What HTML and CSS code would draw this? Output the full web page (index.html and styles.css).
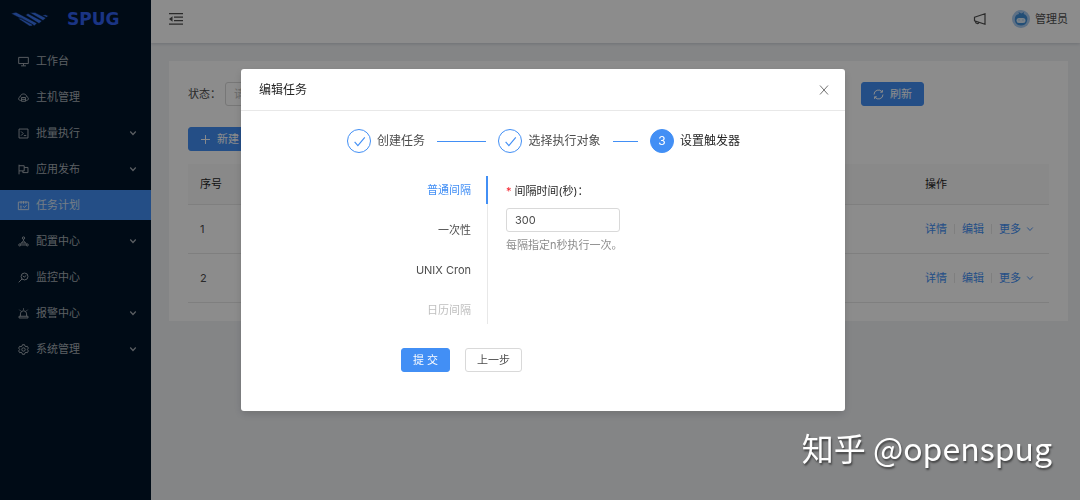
FILE: index.html
```html
<!DOCTYPE html>
<html lang="zh-CN">
<head>
<meta charset="utf-8">
<meta name="viewport" content="width=device-width, initial-scale=1">
<title>编辑任务</title>
<link rel="stylesheet" href="styles.css">
</head>
<body>
<svg class="sprite" aria-hidden="true">
  <symbol id="i-down" viewBox="0 0 16 16"><path d="M2.500 5l5.500 6 5.500-6"/></symbol>
  <symbol id="i-check" viewBox="0 0 16 16"><path d="M2 8.500l4 4.500L14.500 3"/></symbol>
</svg>
<div class="layout">
  <aside class="sider">
    <a class="brand" href="#">
      <svg class="brand-mark" viewBox="0 0 38 16" aria-hidden="true">
        <path d="M0 2.500L5 1.200 26 12.200 23.500 14.700z M7 7.500l3-.6 12 6.800-1.500 1.300h-2z M14.500 4l2.500-1.500 14 7.500-3 2.500z M18.500 1.500h5.500l11 5.500-3 2.500z M31 4.200l3.500-.5 3 1.300-2 1.300z"/>
      </svg>
      <span class="brand-name">SPUG</span>
    </a>
    <nav class="menu">
      <a class="menu-item" href="#"><svg class="icon" viewBox="0 0 16 16"><path d="M1 2h14v9H1zM8 11v3M4.500 14.300h7"/></svg><span>工作台</span></a>
      <a class="menu-item" href="#"><svg class="icon" viewBox="0 0 16 16"><path d="M4 12.500C.3 12.300-.2 7.700 3.200 7 4 1.500 12 1.500 12.800 7c3.400.7 2.900 5.300-.8 5.500M5 8h6v5.500H5zM5 10.700h6"/></svg><span>主机管理</span></a>
      <a class="menu-item" href="#"><svg class="icon" viewBox="0 0 16 16"><path d="M1.500 1.500h13v13h-13zM4.500 5l3 3-3 3M8.500 11h3.500"/></svg><span>批量执行</span><svg class="arrow"><use href="#i-down"/></svg></a>
      <a class="menu-item" href="#"><svg class="icon" viewBox="0 0 16 16"><path d="M1.500 1v14M1.500 2.500H9v7.500H1.500M9 5h5.500v7.500H7V10"/></svg><span>应用发布</span><svg class="arrow"><use href="#i-down"/></svg></a>
      <a class="menu-item active" href="#"><svg class="icon" viewBox="0 0 16 16"><path d="M.5 3h15v11H.5zM4.500 1.500v4M8 1.500v4M11.500 1.500v4M3 9h2.500M3 11.500h2.500M7.500 9l1.800 2L12.500 7.500"/></svg><span>任务计划</span></a>
      <a class="menu-item" href="#"><svg class="icon" viewBox="0 0 16 16"><circle cx="8" cy="3" r="1.700"/><circle cx="2.500" cy="13" r="1.500"/><circle cx="13.500" cy="13" r="1.500"/><path d="M8 4.700v2L4.500 11M8 6.700l3.500 4.300M4.500 13h7M3.500 11.500l1.500-1.300h6l1.500 1.300"/></svg><span>配置中心</span><svg class="arrow"><use href="#i-down"/></svg></a>
      <a class="menu-item" href="#"><svg class="icon" viewBox="0 0 16 16"><circle cx="9.500" cy="6.500" r="5"/><path d="M6 10l-5 5M7 5.500l2 2 3-2.500"/></svg><span>监控中心</span></a>
      <a class="menu-item" href="#"><svg class="icon" viewBox="0 0 16 16"><path d="M1.500 14.500h13v-2.500h-13zM3.500 12V8.500a4.500 4.500 0 0 1 9 0V12M8 .5v2M2 2.500l1.500 1.500M14 2.500L12.500 4"/></svg><span>报警中心</span><svg class="arrow"><use href="#i-down"/></svg></a>
      <a class="menu-item" href="#"><svg class="icon" viewBox="0 0 16 16"><circle cx="8" cy="8" r="2.500"/><path d="M6.500 1h3l.6 2 1.500.9 2-.5 1.500 2.600L13.700 7.500v1l1.400 1.500-1.500 2.600-2-.5-1.500.9-.6 2h-3l-.6-2-1.500-.9-2 .5L.9 10l1.400-1.500v-1L.9 6l1.500-2.600 2 .5L5.900 3z"/></svg><span>系统管理</span><svg class="arrow"><use href="#i-down"/></svg></a>
    </nav>
  </aside>

  <div class="main">
    <header class="topbar">
      <button class="plain fold" type="button" aria-label="收起菜单">
        <svg viewBox="0 0 14 12"><path d="M0 .7h14M5 4.200h9M5 7.700h9M0 11.200h14"/><path class="solid" d="M0 6l3.500-2.700v5.400z"/></svg>
      </button>
      <div class="topbar-right">
        <button class="plain notice" type="button" aria-label="通知">
          <svg viewBox="0 0 14 12"><path d="M1.500 4.300L12 .8v10.400L1.500 7.800zM2.500 8.300c-.2 2.600 3 2.900 3.500 1"/></svg>
        </button>
        <a class="user" href="#">
          <svg class="avatar" viewBox="0 0 18 18" aria-hidden="true">
            <circle cx="9" cy="9" r="9" fill="#a9cdf2"/>
            <path d="M3 11C2 6 5 4.500 7 4L6.500 2l3 1.500L12 2l-.3 2C15 5 16 8 15 11c-1 6-11 6-12 0z" fill="#3f8ed8"/>
            <rect x="4.500" y="8" width="9" height="5" rx="2.500" fill="#dcebf8"/>
            <path d="M6.500 10h1M10.500 10h1" stroke="#7fb0e0" fill="none"/>
          </svg>
          <span>管理员</span>
        </a>
      </div>
    </header>

    <main class="card">
      <form class="filters">
        <div class="filter">
          <label for="status">状态：</label>
          <select id="status" class="select"><option>请选择</option></select>
        </div>
        <div class="filter-actions">
          <button class="btn primary" type="button"><svg class="icon" viewBox="0 0 16 16"><path d="M1.500 8a6.500 6.500 0 0 1 11.800-3.800M14.500 8a6.500 6.500 0 0 1-11.800 3.800M13.700 1.500v3.200h-3.200M2.300 14.500v-3.200h3.200"/></svg>刷新</button>
        </div>
      </form>
      <div class="toolbar">
        <button class="btn primary" type="button"><svg class="icon" viewBox="0 0 16 16"><path d="M8 1.500v13M1.500 8h13"/></svg>新建</button>
      </div>
      <table class="table">
        <thead><tr><th>序号</th><th class="col-actions">操作</th></tr></thead>
        <tbody>
          <tr><td>1</td><td><div class="links"><a href="#">详情</a><a href="#">编辑</a><a href="#">更多<svg class="arrow"><use href="#i-down"/></svg></a></div></td></tr>
          <tr><td>2</td><td><div class="links"><a href="#">详情</a><a href="#">编辑</a><a href="#">更多<svg class="arrow"><use href="#i-down"/></svg></a></div></td></tr>
        </tbody>
      </table>
    </main>
  </div>
</div>

<div class="mask">
  <section class="modal" role="dialog" aria-modal="true" aria-labelledby="modal-title">
    <header class="modal-header">
      <h2 id="modal-title">编辑任务</h2>
      <button class="plain close" type="button" aria-label="关闭"><svg viewBox="0 0 10 10"><path d="M1 .5l8 9M9 .5l-8 9"/></svg></button>
    </header>
    <div class="modal-body">
      <ol class="steps">
        <li class="step done"><span class="step-icon"><svg><use href="#i-check"/></svg></span><span>创建任务</span></li>
        <li class="step done"><span class="step-icon"><svg><use href="#i-check"/></svg></span><span>选择执行对象</span></li>
        <li class="step current" aria-current="step"><span class="step-icon">3</span><span>设置触发器</span></li>
      </ol>
      <div class="trigger">
        <div class="tabs" role="tablist">
          <button class="tab active" type="button" role="tab" aria-selected="true">普通间隔</button>
          <button class="tab" type="button" role="tab">一次性</button>
          <button class="tab" type="button" role="tab">UNIX Cron</button>
          <button class="tab" type="button" role="tab" disabled>日历间隔</button>
        </div>
        <div class="panel" role="tabpanel">
          <label for="interval"><span class="required">*</span>间隔时间(秒)：</label>
          <input id="interval" class="input" type="text" value="300">
          <p class="help">每隔指定n秒执行一次。</p>
        </div>
      </div>
      <div class="modal-actions">
        <button class="btn primary" type="button">提 交</button>
        <button class="btn" type="button">上一步</button>
      </div>
    </div>
  </section>
</div>
<div class="watermark">知乎 @openspug</div>
</body>
</html>
```

FILE: styles.css
```css
* { box-sizing: border-box; }

body {
  margin: 0;
  color: #4d4d4d;
  font: 11px/16px Inter, "Noto Sans CJK SC", sans-serif;
}

button, input, select { font: inherit; color: inherit; }
a { color: inherit; text-decoration: none; }
svg { fill: none; stroke: currentColor; }

.sprite { display: none; }
.icon { width: 11px; height: 11px; stroke-width: 1.4; flex: none; overflow: visible; }
.arrow { width: 8px; height: 8px; stroke-width: 2.4; flex: none; }
.plain { display: flex; padding: 0; border: 0; background: none; }

.layout { display: flex; min-height: 100vh; background: #f0f2f5; }

/* Side menu */
.sider { width: 151px; flex: none; background: #001529; }
.brand { display: flex; align-items: center; gap: 18px; height: 38px; padding-left: 11px; color: #3060f0; }
.brand-mark { width: 38px; height: 16px; fill: #3a74ee; stroke: #001529; stroke-width: 0.5; }
.brand-name { font: bold 17px/16px "DejaVu Sans", sans-serif; }
.menu { display: flex; flex-direction: column; gap: 6px; padding-top: 8px; }
.menu-item { display: flex; align-items: center; gap: 7px; height: 30px; padding: 0 14px 0 18px; color: #a6adb4; }
.menu-item .arrow { margin-left: auto; }
.menu-item.active { background: #428ff5; color: #d6e4f5; }

/* Page */
.main { flex: 1; min-width: 0; }
.topbar { display: flex; align-items: center; justify-content: space-between; height: 43px; padding: 0 12px 6px 18px; background: #fff; box-shadow: 0 1px 3px rgba(0, 21, 41, 0.16); }
.topbar-right, .user { display: flex; align-items: center; }
.topbar-right { gap: 25px; }
.user { gap: 5px; }
.avatar { width: 18px; height: 18px; stroke: none; }
.fold svg { width: 14px; height: 12px; stroke-width: 1.3; }
.fold .solid { fill: currentColor; stroke: none; }
.notice svg { width: 14px; height: 12px; stroke-width: 1.2; }

.card { margin: 18px 12px 18px 18px; padding: 21px 19px 18px; background: #fff; }
.filters { display: flex; align-items: center; }
.filter { display: flex; flex: 1; align-items: center; gap: 4px; }
.filter-actions { width: 188px; }
.select { width: 210px; height: 24px; padding: 0 8px; border: 1px solid #d9d9d9; border-radius: 3px; background: #fff; color: #bfbfbf; appearance: none; }
.toolbar { padding: 21px 0 13px; }

.btn { display: inline-flex; align-items: center; justify-content: center; gap: 6px; height: 24px; padding: 0 11px; border: 1px solid #d9d9d9; border-radius: 3px; background: #fff; }
.btn.primary { border-color: #428ff5; background: #428ff5; color: #fff; }

.table { width: 100%; border-collapse: collapse; }
.table th { height: 40px; background: #fafafa; font-weight: 400; color: #262626; }
.table td { height: 49px; }
.table th, .table td { padding: 0 12px; border-bottom: 1px solid #e8e8e8; text-align: left; }
.table .arrow { stroke-width: 1.8; }
.col-actions { width: 136px; }
.links { display: flex; align-items: center; color: #428ff5; }
.links a { display: flex; align-items: center; gap: 5px; line-height: 10px; padding: 0 7px; border-left: 1px solid #e8e8e8; white-space: nowrap; }
.links a:first-child { padding-left: 0; border-left: 0; }
.links a:last-child { padding-right: 0; }

/* Modal */
.mask { position: fixed; inset: 0; display: flex; align-items: flex-start; justify-content: center; padding: 69px 0 0 6px; background: rgba(0, 0, 0, 0.45); }
.modal { width: 604px; border-radius: 3px; background: #fff; box-shadow: 0 3px 9px rgba(0, 0, 0, 0.15); }
.modal-header { display: flex; align-items: center; justify-content: space-between; height: 42px; padding: 0 16px 0 18px; border-bottom: 1px solid #e8e8e8; }
.modal-header h2 { margin: 0; font-size: 12px; font-weight: 400; color: #262626; }
.close { color: #737373; }
.close svg { width: 10px; height: 10px; }
.modal-body { padding: 18px 105px 39px; }

.steps { display: grid; grid-template-columns: 1fr 1fr auto; margin: 0; padding: 0 0 0 1px; list-style: none; font-size: 12px; }
.step { display: flex; align-items: center; gap: 6px; white-space: nowrap; }
.step-icon { display: flex; align-items: center; justify-content: center; width: 24px; height: 24px; border: 1px solid #428ff5; border-radius: 50%; color: #428ff5; }
.step-icon svg { width: 13px; height: 13px; stroke-width: 1.4; }
.step.done::after { content: ""; flex: 1; height: 1px; margin: 0 12px 0 6px; background: #428ff5; }
.step.current { color: #262626; }
.step.current .step-icon { background: #428ff5; color: #fff; }

.trigger { display: flex; padding-top: 23px; }
.tabs { display: flex; flex-direction: column; gap: 12px; width: 142px; border-right: 1px solid #e8e8e8; }
.tab { height: 28px; margin-right: -1px; padding: 0 15px 0 0; border: 0; border-right: 2px solid transparent; background: none; text-align: right; }
.tab.active { border-right-color: #428ff5; color: #428ff5; }
.tab:disabled { color: #bfbfbf; }
.panel { flex: 1; padding: 7px 0 0 18px; }
.panel label { display: block; color: #262626; }
.required { margin-right: 3px; color: #f5222d; }
.input { display: block; width: 114px; height: 24px; margin: 9px 0 5px; padding: 0 8px; border: 1px solid #d9d9d9; border-radius: 3px; }
.help { margin: 0; color: #8c8c8c; }
.modal-actions { display: flex; gap: 15px; padding: 24px 0 0 55px; }

.watermark { position: fixed; right: 28px; bottom: 29px; color: #fff; font: 32px/48px "Noto Sans CJK SC", sans-serif; text-shadow: 1px 2px 2px rgba(0, 0, 0, 0.5); }
```
